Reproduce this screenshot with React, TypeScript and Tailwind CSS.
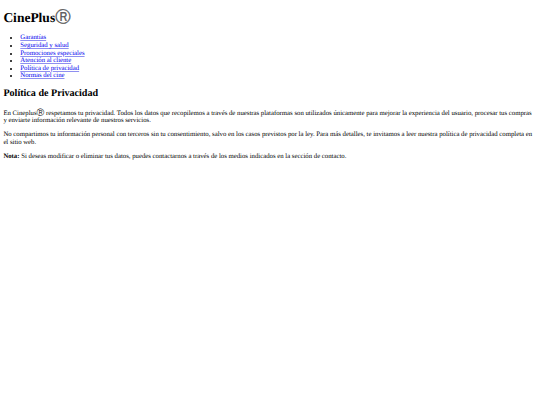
const links = [
  "Garantías",
  "Seguridad y salud",
  "Promociones especiales",
  "Atención al cliente",
  "Política de privacidad",
  "Normas del cine",
];

export default function App() {
  return (
    <div className="px-[3.375px] py-[0.1px] bg-white text-black text-[6.75px] leading-[7.6px] antialiased [text-rendering:geometricPrecision] font-['Liberation_Serif',serif]">
      <h1 className="text-[13.5px] leading-[15.6px] font-bold mt-[9.8px] mb-[9px]">
        CinePlus<span className="text-[15.5px] leading-none text-[#555] font-normal [-webkit-text-stroke:0.3px_#555] font-['DejaVu_Sans',sans-serif]">Ⓡ</span>
      </h1>
      <ul className="list-disc pl-[16.9px] mb-[8.4px]">
        {links.map((l) => (
          <li key={l}>
            <a href="#" className="text-[#0000ee] underline decoration-[#8f8ff0]">{l}</a>
          </li>
        ))}
      </ul>
      <h2 className="text-[10.1px] leading-[11.4px] font-bold mb-[8.8px]">Política de Privacidad</h2>
      <p className="mb-[6.6px]">
        En Cineplus<span className="text-[7.8px] leading-none font-['DejaVu_Sans',sans-serif]">Ⓡ</span> respetamos tu privacidad. Todos los datos que recopilemos a través de nuestras plataformas son utilizados únicamente para mejorar la experiencia del usuario, procesar tus compras y enviarte información relevante de nuestros servicios.
      </p>
      <p className="mb-[6.6px]">
        No compartimos tu información personal con terceros sin tu consentimiento, salvo en los casos previstos por la ley. Para más detalles, te invitamos a leer nuestra política de privacidad completa en el sitio web.
      </p>
      <p>
        <strong>Nota:</strong> Si deseas modificar o eliminar tus datos, puedes contactarnos a través de los medios indicados en la sección de contacto.
      </p>
    </div>
  );
}
